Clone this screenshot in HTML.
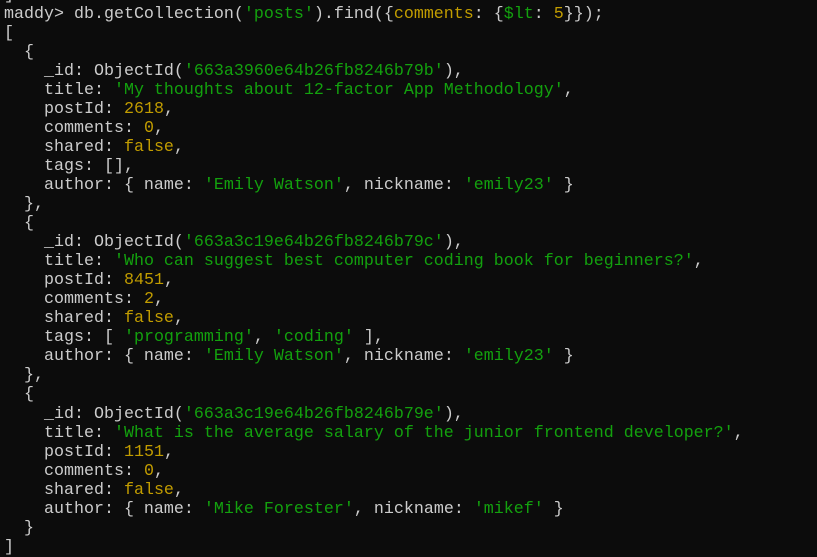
<!DOCTYPE html>
<html><head><meta charset="utf-8"><style>
html,body{margin:0;padding:0;background:#0c0c0c;width:817px;height:548px;overflow:hidden}
pre{margin:0;position:absolute;left:4px;top:-14.5px;font-family:"Liberation Mono",monospace;font-size:16.67px;line-height:19.04px;color:#cccccc;white-space:pre}
.g{color:#13a10e}.y{color:#c19c00}
</style></head><body><pre>]
maddy&gt; db.getCollection(<span class="g">'posts'</span>).find({<span class="y">comments</span>: {<span class="g">$lt</span>: <span class="y">5</span>}});
[
  {
    _id: ObjectId(<span class="g">'663a3960e64b26fb8246b79b'</span>),
    title: <span class="g">'My thoughts about 12-factor App Methodology'</span>,
    postId: <span class="y">2618</span>,
    comments: <span class="y">0</span>,
    shared: <span class="y">false</span>,
    tags: [],
    author: { name: <span class="g">'Emily Watson'</span>, nickname: <span class="g">'emily23'</span> }
  },
  {
    _id: ObjectId(<span class="g">'663a3c19e64b26fb8246b79c'</span>),
    title: <span class="g">'Who can suggest best computer coding book for beginners?'</span>,
    postId: <span class="y">8451</span>,
    comments: <span class="y">2</span>,
    shared: <span class="y">false</span>,
    tags: [ <span class="g">'programming'</span>, <span class="g">'coding'</span> ],
    author: { name: <span class="g">'Emily Watson'</span>, nickname: <span class="g">'emily23'</span> }
  },
  {
    _id: ObjectId(<span class="g">'663a3c19e64b26fb8246b79e'</span>),
    title: <span class="g">'What is the average salary of the junior frontend developer?'</span>,
    postId: <span class="y">1151</span>,
    comments: <span class="y">0</span>,
    shared: <span class="y">false</span>,
    author: { name: <span class="g">'Mike Forester'</span>, nickname: <span class="g">'mikef'</span> }
  }
]</pre></body></html>
